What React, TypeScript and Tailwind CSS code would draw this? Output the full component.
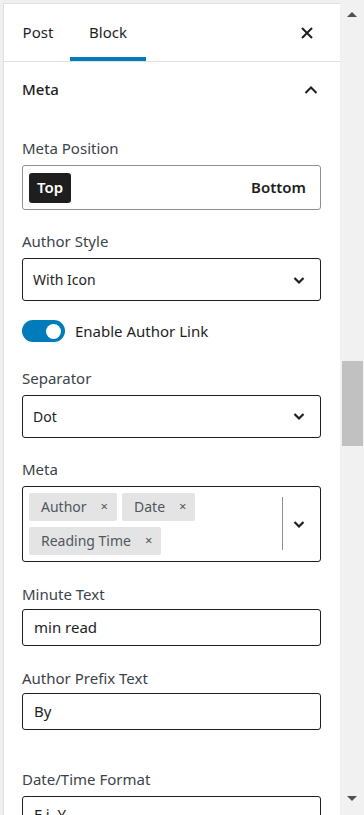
import React from "react";

const font = { fontFamily: '"Noto Sans", "Open Sans", Arial, sans-serif' };

function Chevron({ up = false }: { up?: boolean }) {
  return (
    <svg width="24" height="24" viewBox="0 0 24 24" className="shrink-0">
      {up ? (
        <path d="M6.5 15 12 9.5 17.5 15" fill="none" stroke="#1e1e1e" strokeWidth="2" />
      ) : (
        <path d="M7.5 10 12 14.5 16.5 10" fill="none" stroke="#1e1e1e" strokeWidth="2.2" />
      )}
    </svg>
  );
}

function Label({ children, tight = false }: { children: React.ReactNode; tight?: boolean }) {
  return (
    <div className={`text-[15px] leading-5 text-[#3c434a] ${tight ? "mb-[5px]" : "mb-[7px]"}`}>
      {children}
    </div>
  );
}

function Select({ value }: { value: string }) {
  return (
    <div className="h-[43px] border border-[#1e1e1e] rounded-[3px] flex items-center pl-[10px] pr-[9px] text-[14px] text-[#1e1e1e]">
      <span className="flex-1">{value}</span>
      <Chevron />
    </div>
  );
}

function Tag({ label }: { label: string }) {
  return (
    <div className="h-[28px] bg-[#e4e4e4] rounded-[2px] flex items-center pl-3 pr-[9px] text-[14px] text-[#50575e]">
      <span>{label}</span>
      <span className="ml-[14px] text-[13px]">×</span>
    </div>
  );
}

function TextInput({ value }: { value: string }) {
  return (
    <div className="h-[37px] border border-[#1e1e1e] rounded-[3px] flex items-center pl-[11px] text-[15px] text-[#1e1e1e]">
      {value}
    </div>
  );
}

export default function App() {
  return (
    <div className="h-[815px] w-[364px] overflow-hidden flex bg-[#f0f0f0]" style={font}>
      {/* Panel */}
      <div className="w-[340px] shrink-0 flex flex-col pl-[3px] pt-[3px]">
        <div className="flex-1 bg-white border-l border-t border-[#e0e0e0] flex flex-col">
          {/* Tabs */}
          <div className="h-[58px] border-b border-[#e0e0e0] flex items-stretch pl-[2px] pr-[21px]">
            <div className="w-[64px] flex items-center justify-center text-[15px] text-[#1e1e1e]">Post</div>
            <div className="w-[76px] flex items-center justify-center text-[15px] text-[#1e1e1e] relative">
              Block
              <span className="absolute left-0 right-0 bottom-0 h-[4px] bg-[#007cba]" />
            </div>
            <div className="flex-1" />
            <div className="flex items-center">
              <svg width="24" height="24" viewBox="0 0 24 24">
                <path d="M7 7 17 17M17 7 7 17" stroke="#1e1e1e" strokeWidth="2" />
              </svg>
            </div>
          </div>

          {/* Meta header */}
          <div className="h-[55px] flex items-center pl-[18px] pr-[17px]">
            <span className="flex-1 text-[15px] font-medium text-[#1e1e1e]">Meta</span>
            <Chevron up />
          </div>

          <div className="pl-[18px] pr-[19px] pt-[21px] flex flex-col">
            <Label>Meta Position</Label>
            <div className="h-[45px] border border-[#8c8f94] rounded-[3px] flex items-center px-[6px] text-[15px] font-semibold">
              <div className="h-[30px] px-[8px] bg-[#1e1e1e] text-white rounded-[3px] flex items-center">Top</div>
              <div className="flex-1" />
              <div className="pr-[8px] text-[#1e1e1e]">Bottom</div>
            </div>

            <div className="mt-[21px]">
              <Label>Author Style</Label>
              <Select value="With Icon" />
            </div>

            <div className="mt-[19px] flex items-center">
              <div className="w-[43px] h-[22px] rounded-full bg-[#007cba] flex items-center justify-end pr-[4px]">
                <div className="w-[15px] h-[15px] rounded-full bg-white" />
              </div>
              <span className="ml-[10px] text-[15px] text-[#1e1e1e]">Enable Author Link</span>
            </div>

            <div className="mt-[25px]">
              <Label>Separator</Label>
              <Select value="Dot" />
            </div>

            <div className="mt-[21px]">
              <Label>Meta</Label>
              <div className="h-[76px] border border-[#1e1e1e] rounded-[3px] flex items-center pl-[6px] pr-[9px]">
                <div className="flex-1 flex flex-wrap gap-x-[5px] gap-y-[6px]">
                  <Tag label="Author" />
                  <Tag label="Date" />
                  <Tag label="Reading Time" />
                </div>
                <div className="w-px h-[53px] bg-[#8c8f94] mr-[4px]" />
                <Chevron />
              </div>
            </div>

            <div className="mt-[22px]">
              <Label tight>Minute Text</Label>
              <TextInput value="min read" />
            </div>

            <div className="mt-[22px]">
              <Label tight>Author Prefix Text</Label>
              <TextInput value="By" />
            </div>

            <div className="mt-[39px]">
              <Label>Date/Time Format</Label>
              <div className="h-[37px] border border-[#1e1e1e] rounded-[3px] flex items-center pl-[11px] text-[15px] text-[#1e1e1e]">
                F j, Y
              </div>
            </div>
          </div>
        </div>
      </div>

      {/* Scrollbar */}
      <div className="flex-1 bg-[#f1f1f1] flex flex-col items-center">
        <div className="h-[17px] flex items-end">
          <div className="w-0 h-0 border-l-[5px] border-r-[5px] border-b-[5px] border-l-transparent border-r-transparent border-b-[#505050]" />
        </div>
        <div className="mt-[344px] w-[21px] h-[85px] bg-[#c1c1c1]" />
        <div className="flex-1" />
        <div className="h-[17px] mb-[2px] flex items-start">
          <div className="w-0 h-0 border-l-[5px] border-r-[5px] border-t-[5px] border-l-transparent border-r-transparent border-t-[#505050]" />
        </div>
      </div>
    </div>
  );
}
